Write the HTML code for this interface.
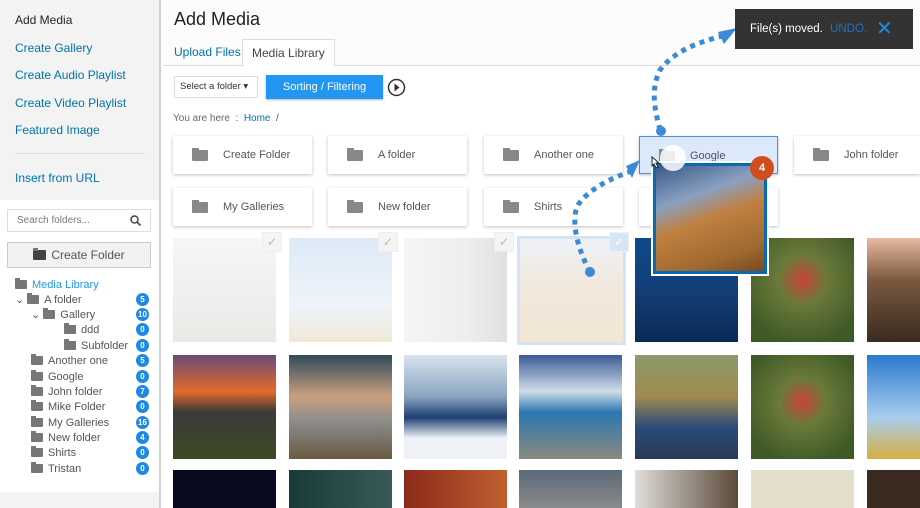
<!DOCTYPE html>
<html><head><meta charset="utf-8"><style>
*{box-sizing:border-box;margin:0;padding:0}
html,body{width:920px;height:508px;overflow:hidden}
body{background:#fff;font-family:"Liberation Sans",sans-serif;color:#444}
#w{position:relative;width:920px;height:508px;overflow:hidden}
.side{position:absolute;left:0;top:0;width:161px;height:508px;background:#f3f3f3;border-right:2px solid #d0d0d0}
.side .lk{position:absolute;left:15px;font-size:12px;color:#0073aa}
.white{position:absolute;left:0;top:200px;width:159px;height:292px;background:#fff}
.search{position:absolute;left:7px;top:209px;width:144px;height:23px;border:1px solid #ddd;background:#fff;font-size:10px;color:#777;padding:5px 9px}
.cf{position:absolute;left:7px;top:242px;width:144px;height:26px;border:1px solid #ccc;background:#f2f2f2;font-size:12px;color:#555;text-align:center;line-height:25px}
.tr{position:absolute;font-size:11px;color:#555;height:14px;line-height:14px}
.fi{display:inline-block;width:12px;height:9px;background:#777;border-radius:1px;margin-right:5px;vertical-align:-1px;position:relative}
.fi:before{content:"";position:absolute;left:0;top:-2px;width:5px;height:3px;background:#777}
.bd{position:absolute;left:136px;width:13px;height:13px;border-radius:50%;background:#1e88e5;color:#fff;font-size:8px;font-weight:bold;text-align:center;line-height:13px}
.h{position:absolute;left:174px;top:9px;font-size:18px;color:#222}
.tab{position:absolute;top:39px;height:28px;font-size:12px;line-height:26px;padding:0 9px}
.card{position:absolute;width:139px;height:38px;background:#fff;box-shadow:0 1px 3px rgba(0,0,0,.25);font-size:11px;color:#555;line-height:38px;padding-left:50px}
.card .fi{position:absolute;left:19px;top:14px;width:16px;height:11px;background:#888}
.card .fi:before{background:#888;width:7px}
.t{position:absolute;width:103px;height:104px}
.r3{height:38px}
.ck{position:absolute;width:20px;height:20px;background:#f4f4f4;border:1px solid #eee;color:#bbb;font-size:12px;text-align:center;line-height:18px}
</style></head><body><div id="w">
<div class="side">
<div class="lk" style="top:13px;color:#23282d">Add Media</div>
<div class="lk" style="top:41px">Create Gallery</div>
<div class="lk" style="top:68px">Create Audio Playlist</div>
<div class="lk" style="top:96px">Create Video Playlist</div>
<div class="lk" style="top:123px">Featured Image</div>
<div style="position:absolute;left:15px;top:153px;width:130px;border-top:1px solid #ddd"></div>
<div class="lk" style="top:171px">Insert from URL</div>
<div class="white"></div>
<div class="search">Search folders...<svg style="position:absolute;right:9px;top:5px" width="11" height="11"><circle cx="4.5" cy="4.5" r="3.5" fill="none" stroke="#444" stroke-width="1.5"/><line x1="7" y1="7" x2="10.5" y2="10.5" stroke="#444" stroke-width="1.6"/></svg></div>
<div class="cf"><span class="fi" style="background:#444;width:13px;height:10px"></span>Create Folder</div>
<div class="tr" style="left:15px;top:278px;color:#2196f3"><span class="fi"></span>Media Library</div>
<div class="tr" style="left:15px;top:293px">⌄ <span class="fi"></span>A folder</div><div class="bd" style="top:293px">5</div>
<div class="tr" style="left:31px;top:308px">⌄ <span class="fi"></span>Gallery</div><div class="bd" style="top:308px">10</div>
<div class="tr" style="left:64px;top:323px"><span class="fi"></span>ddd</div><div class="bd" style="top:323px">0</div>
<div class="tr" style="left:64px;top:339px"><span class="fi"></span>Subfolder</div><div class="bd" style="top:339px">0</div>
<div class="tr" style="left:31px;top:354px"><span class="fi"></span>Another one</div><div class="bd" style="top:354px">5</div>
<div class="tr" style="left:31px;top:370px"><span class="fi"></span>Google</div><div class="bd" style="top:370px">0</div>
<div class="tr" style="left:31px;top:385px"><span class="fi"></span>John folder</div><div class="bd" style="top:385px">7</div>
<div class="tr" style="left:31px;top:400px"><span class="fi"></span>Mike Folder</div><div class="bd" style="top:400px">0</div>
<div class="tr" style="left:31px;top:416px"><span class="fi"></span>My Galleries</div><div class="bd" style="top:416px">16</div>
<div class="tr" style="left:31px;top:431px"><span class="fi"></span>New folder</div><div class="bd" style="top:431px">4</div>
<div class="tr" style="left:31px;top:446px"><span class="fi"></span>Shirts</div><div class="bd" style="top:446px">0</div>
<div class="tr" style="left:31px;top:462px"><span class="fi"></span>Tristan</div><div class="bd" style="top:462px">0</div>
</div>
<div style="position:absolute;left:163px;top:0;width:757px;height:66px;background:#fcfcfc;border-bottom:1px solid #ddd"></div>
<div class="h">Add Media</div>
<div class="tab" style="left:165px;color:#0073aa">Upload Files</div>
<div class="tab" style="left:242px;border:1px solid #ddd;border-bottom:1px solid #fff;background:#fff;color:#444">Media Library</div>
<div style="position:absolute;left:174px;top:76px;width:84px;height:22px;border:1px solid #ddd;font-size:9.5px;line-height:20px;padding-left:5px;color:#333">Select a folder ▾</div>
<div style="position:absolute;left:266px;top:75px;width:117px;height:24px;background:#2196f3;color:#fff;font-size:11px;line-height:24px;text-align:center;box-shadow:0 1px 2px rgba(0,0,0,.3)">Sorting / Filtering</div>
<svg style="position:absolute;left:387px;top:78px" width="19" height="19"><circle cx="9.5" cy="9.5" r="8" fill="none" stroke="#333" stroke-width="1.5"/><path d="M7.5 5.5L12.5 9.5 7.5 13.5Z" fill="#333"/></svg>
<div style="position:absolute;left:173px;top:113px;font-size:10px;color:#555"><span style="color:#666">You are here</span> &nbsp;: &nbsp;<span style="color:#0073aa">Home</span> &nbsp;/</div>
<div class="card" style="left:173px;top:136px"><span class="fi"></span>Create Folder</div>
<div class="card" style="left:328px;top:136px"><span class="fi"></span>A folder</div>
<div class="card" style="left:484px;top:136px"><span class="fi"></span>Another one</div>
<div class="card" style="left:639px;top:136px;background:#dce9fb;border:1px solid #4a90e2"><span class="fi"></span>Google</div>
<div class="card" style="left:794px;top:136px;width:126px"><span class="fi"></span>John folder</div>
<div class="card" style="left:173px;top:188px"><span class="fi"></span>My Galleries</div>
<div class="card" style="left:328px;top:188px"><span class="fi"></span>New folder</div>
<div class="card" style="left:484px;top:188px"><span class="fi"></span>Shirts</div>
<div class="card" style="left:639px;top:188px"></div>
<div class="t" style="left:173px;top:238px;background:linear-gradient(#f6f6f6,#eee 60%,#ebe9e6)"></div>
<div class="t" style="left:289px;top:238px;background:linear-gradient(#dceaf7,#eef4fa 65%,#f0e8d8)"></div>
<div class="t" style="left:404px;top:238px;background:linear-gradient(90deg,#f5f5f5,#eee 60%,#e2e0de)"></div>
<div class="t" style="left:517px;top:236px;width:109px;height:109px;border:3px solid #d3e3f2;background:linear-gradient(#eef2f7,#f1e7db 50%,#f3e6d4)"></div>
<div class="t" style="left:635px;top:238px;background:linear-gradient(#0d4a8a,#123f78 50%,#0a2a55)"></div>
<div class="t" style="left:751px;top:238px;background:radial-gradient(circle at 50% 40%,#c9433a 0,#6a7a3a 30%,#3f5a26 80%)"></div>
<div class="t" style="left:867px;top:238px;width:53px;background:linear-gradient(#e9b9a0,#7a5a40 40%,#3a2a20)"></div>
<div class="ck" style="left:262px;top:232px">✓</div><div class="ck" style="left:378px;top:232px">✓</div><div class="ck" style="left:494px;top:232px">✓</div><div class="ck" style="left:609px;top:232px;background:#d7e6f5;color:#fff">✓</div>
<div class="t" style="left:173px;top:355px;background:linear-gradient(#6b4a7a,#e36a2a 35%,#3a3a3a 55%,#3f4a25)"></div>
<div class="t" style="left:289px;top:355px;background:linear-gradient(#2f4a5a,#c9a080 40%,#8a8a8a 65%,#6a5a40)"></div>
<div class="t" style="left:404px;top:355px;background:linear-gradient(#d8e4ef,#8aa4c0 40%,#1d3f72 60%,#eef2f6 80%)"></div>
<div class="t" style="left:519px;top:355px;background:linear-gradient(#3a5a95,#d0dde8 35%,#2a78b0 55%,#8a8a80)"></div>
<div class="t" style="left:635px;top:355px;background:linear-gradient(#8a9a6a,#a08a50 40%,#2a4a7a 70%,#2a3a55)"></div>
<div class="t" style="left:751px;top:355px;background:radial-gradient(circle at 50% 45%,#c9433a 0,#6a7a3a 30%,#3f5a26 80%)"></div>
<div class="t" style="left:867px;top:355px;width:53px;background:linear-gradient(#2a7ad0,#a9cdef 60%,#d4b040)"></div>
<div class="t r3" style="left:173px;top:470px;background:#0a0a20"></div>
<div class="t r3" style="left:289px;top:470px;background:linear-gradient(90deg,#1a3a3a,#3a5a5a)"></div>
<div class="t r3" style="left:404px;top:470px;background:linear-gradient(90deg,#8a2a1a,#c06030)"></div>
<div class="t r3" style="left:519px;top:470px;background:linear-gradient(#5a6a7a,#8a8a8a)"></div>
<div class="t r3" style="left:635px;top:470px;background:linear-gradient(90deg,#e0ddd8,#5a4a3a)"></div>
<div class="t r3" style="left:751px;top:470px;background:#e3dfcc"></div>
<div class="t r3" style="left:867px;top:470px;width:53px;background:#3a2a20"></div>
<div style="position:absolute;left:653px;top:163px;width:114px;height:111px;border:3px solid #0a6ab0;outline:2px solid #fff;background:linear-gradient(160deg,#3a5a8a,#8aa0c0 30%,#c08040 50%,#a06a30 80%,#7a4a20)"></div>
<div style="position:absolute;left:660px;top:145px;width:26px;height:26px;border-radius:50%;background:#fff;opacity:.85"></div>
<div style="position:absolute;left:750px;top:156px;width:24px;height:24px;border-radius:50%;background:#d14d1e;color:#fff;font-weight:bold;font-size:11px;text-align:center;line-height:24px">4</div>
<svg style="position:absolute;left:0;top:0" width="920" height="508">
<g fill="none" stroke="#3a8ad8" stroke-width="5" stroke-dasharray="5 5">
<path d="M590 272 C578 250 570 220 578 205 C588 190 610 178 635 170"/>
<path d="M660 130 C655 110 650 90 660 70 C675 50 700 42 722 36"/>
</g>
<circle cx="590" cy="272" r="5" fill="#3a8ad8"/>
<circle cx="661" cy="131" r="5" fill="#3a8ad8"/>
<path d="M640 160 L632 178 L626 166Z" fill="#3a8ad8"/>
<path d="M737 28 L724 44 L718 32Z" fill="#3a8ad8"/>
<path d="M652 157 v9 l2 -2 l2 4 l2 -1 l-2 -4 h3 z" fill="#fff" stroke="#222" stroke-width="1"/>
</svg>
<div style="position:absolute;left:735px;top:9px;width:178px;height:40px;background:#333;color:#fff;font-size:11.5px;line-height:40px;padding-left:15px">File(s) moved. <span style="color:#1e73be;margin-left:4px">UNDO.</span><span style="color:#1e88e5;font-size:20px;position:absolute;left:141px;top:0">✕</span></div>
</div></body></html>
